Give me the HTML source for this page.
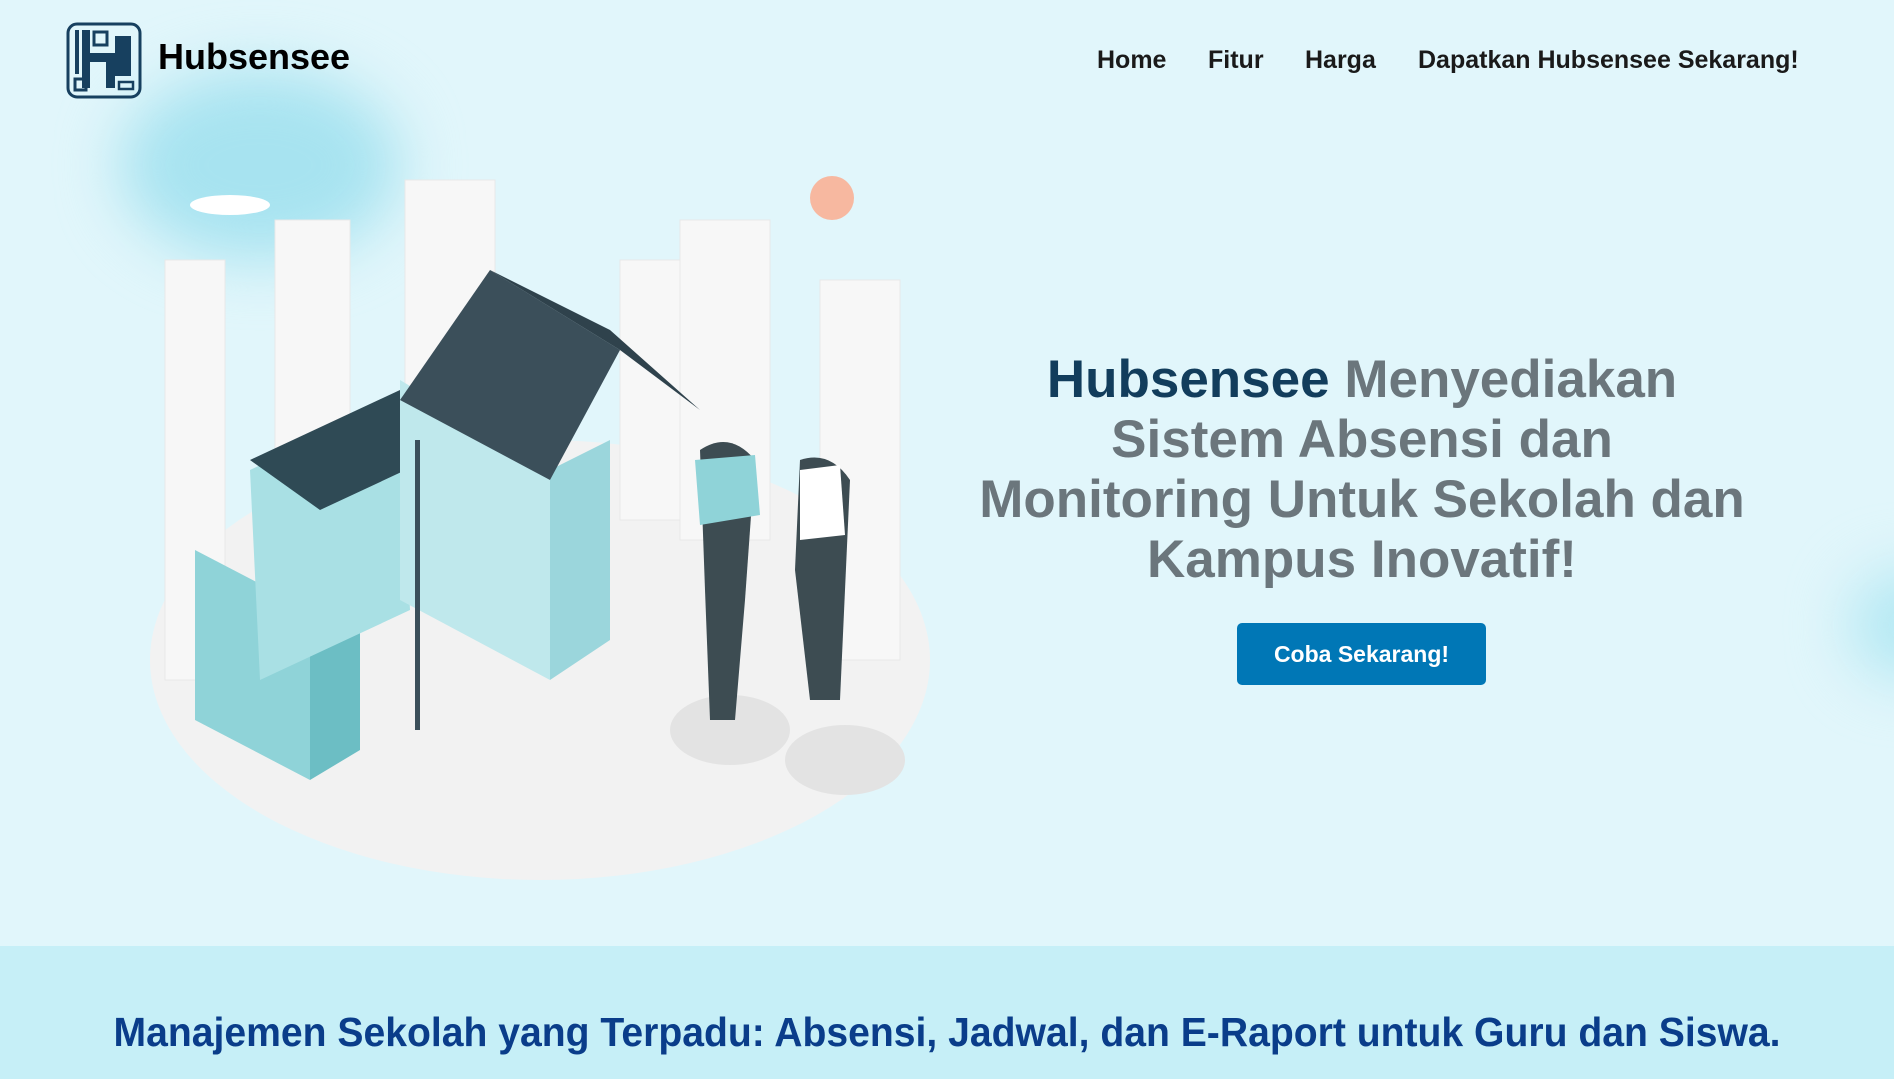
<!DOCTYPE html>
<html><head><meta charset="utf-8"><style>
*{margin:0;padding:0;box-sizing:border-box}
body{width:1894px;height:1079px;overflow:hidden;background:#e1f6fb;font-family:"Liberation Sans",sans-serif;position:relative}
.blob{position:absolute;border-radius:50%;filter:blur(30px)}
.logo{position:absolute;left:66px;top:22px;width:76px;height:77px}
.brand{position:absolute;left:158px;top:36px;font-size:36px;font-weight:bold;color:#000}
.nav{position:absolute;top:46px;font-size:25px;font-weight:bold;color:#1a1a1a}
.h1{position:absolute;left:950px;width:824px;top:350px;text-align:center;font-size:53px;line-height:60px;font-weight:bold;color:#6b767c}
.h1 b{color:#123d5c}
.btn{position:absolute;left:1237px;top:623px;width:249px;height:62px;background:#0077b6;border-radius:5px;color:#fff;font-weight:bold;font-size:23px;text-align:center;line-height:62px}
.band{position:absolute;left:0;top:946px;width:1894px;height:133px;background:#c6eff7}
.band div{position:absolute;left:0;width:1894px;top:63px;text-align:center;font-size:41px;font-weight:bold;color:#0a3d8a;transform:scaleX(0.954)}
</style></head><body>
<div class="blob" style="left:120px;top:70px;width:280px;height:190px;background:#a7e3f0"></div>
<div class="blob" style="left:1850px;top:570px;width:120px;height:110px;background:#b3e8f3"></div>
<svg class="logo" viewBox="0 0 76 77"><rect x="2" y="2" width="72" height="73" rx="9" fill="none" stroke="#17405f" stroke-width="3"/>
<rect x="9" y="8" width="4" height="44" fill="#17405f"/><rect x="16" y="8" width="8" height="58" fill="#17405f"/><rect x="24" y="31" width="34" height="9" fill="#17405f"/><rect x="40" y="31" width="9" height="35" fill="#17405f"/><rect x="49" y="14" width="16" height="40" fill="#17405f"/><rect x="28" y="10" width="13" height="13" fill="none" stroke="#17405f" stroke-width="3"/><rect x="9" y="57" width="11" height="11" fill="none" stroke="#17405f" stroke-width="3"/><rect x="53" y="60" width="14" height="7" fill="none" stroke="#17405f" stroke-width="2.5"/></svg>
<div class="brand">Hubsensee</div>
<div class="nav" style="left:1097px">Home</div>
<div class="nav" style="left:1208px">Fitur</div>
<div class="nav" style="left:1305px">Harga</div>
<div class="nav" style="left:1418px">Dapatkan Hubsensee Sekarang!</div>
<svg style="position:absolute;left:140px;top:160px" width="800" height="730" viewBox="0 0 800 730">
<ellipse cx="400" cy="500" rx="390" ry="220" fill="#f2f2f2"/>
<g fill="#f7f7f7" stroke="#e8e8e8"><rect x="25" y="100" width="60" height="420"/><rect x="135" y="60" width="75" height="400"/><rect x="265" y="20" width="90" height="330"/><rect x="540" y="60" width="90" height="320"/><rect x="680" y="120" width="80" height="380"/><rect x="480" y="100" width="60" height="260"/></g>
<circle cx="692" cy="38" r="22" fill="#f7b8a0"/>
<ellipse cx="90" cy="45" rx="40" ry="10" fill="#fff"/>
<polygon points="55,390 170,450 170,620 55,560" fill="#8fd3d8"/><polygon points="170,450 220,420 220,590 170,620" fill="#6cbec4"/>
<polygon points="110,310 260,240 270,450 120,520" fill="#a9e0e4"/>
<polygon points="110,300 260,230 330,280 180,350" fill="#2f4a55"/>
<polygon points="260,220 410,310 410,520 260,440" fill="#bfe8ec"/>
<polygon points="410,310 470,280 470,480 410,520" fill="#9bd6dc"/>
<polygon points="260,240 350,110 480,190 410,320" fill="#3b4f5a"/>
<polygon points="350,110 470,170 560,250 480,190" fill="#2f424c"/>
<rect x="275" y="280" width="5" height="290" fill="#3b4f5a"/>
<ellipse cx="590" cy="570" rx="60" ry="35" fill="#e3e3e3"/><ellipse cx="705" cy="600" rx="60" ry="35" fill="#e3e3e3"/>
<path d="M560 290 q30 -20 55 10 l-10 140 -10 120 -25 0 -5 -130z" fill="#3d4c52"/>
<path d="M555 300 l60 -5 l5 60 l-60 10z" fill="#8fd3d8"/>
<path d="M660 300 q30 -10 50 20 l-10 220 -30 0 -15 -130z" fill="#3d4c52"/>
<path d="M660 310 l40 -5 5 70 -45 5z" fill="#fff"/>
</svg>
<div class="h1"><b>Hubsensee</b> Menyediakan<br>Sistem Absensi dan<br>Monitoring Untuk Sekolah dan<br>Kampus Inovatif!</div>
<div class="btn">Coba Sekarang!</div>
<div class="band"><div>Manajemen Sekolah yang Terpadu: Absensi, Jadwal, dan E-Raport untuk Guru dan Siswa.</div></div>
</body></html>
